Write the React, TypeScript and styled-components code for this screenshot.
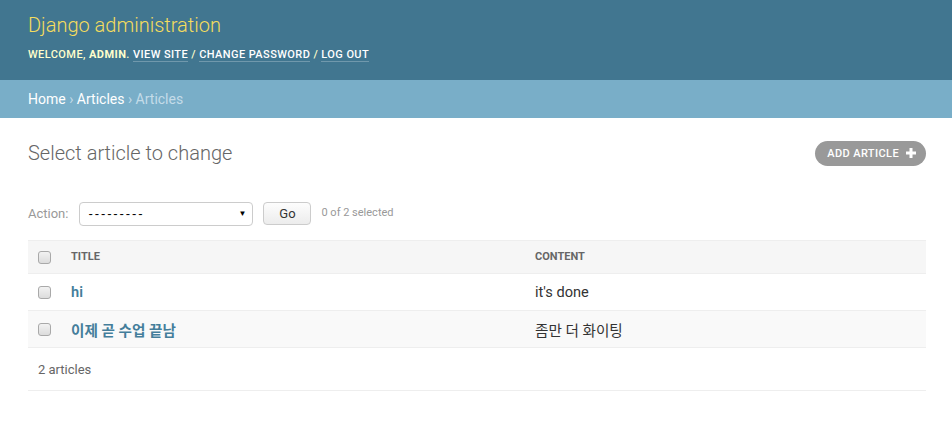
import React from 'react'
import styled, { createGlobalStyle } from 'styled-components'

const GlobalStyle = createGlobalStyle`
  html, body {
    margin: 0;
    padding: 0;
    background: #fff;
  }
  body {
    font-family: Roboto, "Noto Sans CJK KR", "Liberation Sans", sans-serif;
    font-size: 13px;
    color: #333;
  }
`

const Header = styled.header`
  background: #417690;
  color: #ffc;
  height: 80px;
  box-sizing: border-box;
  padding: 11px 28px 0;
`

const Branding = styled.h1`
  margin: 0;
  font-size: 20px;
  font-weight: 300;
  line-height: 28px;
  color: #f5dd5d;
`

const UserTools = styled.div`
  margin-top: 8px;
  font-size: 11px;
  letter-spacing: 0.42px;
  text-transform: uppercase;
  font-weight: 500;
  line-height: 16px;
  color: #ffc;
`

const UserLink = styled.a`
  color: #fff;
  text-decoration: none;
  border-bottom: 1px solid rgba(255, 255, 255, 0.25);
`

const Breadcrumbs = styled.div`
  background: #79aec8;
  padding: 10px 28px;
  font-size: 14px;
  line-height: 18px;
  color: #c4dce8;
`

const Crumb = styled.a`
  color: #fff;
  text-decoration: none;
`

const Content = styled.main`
  padding: 20px 26px 30px 28px;
`

const TitleRow = styled.div`
  display: flex;
  align-items: center;
  justify-content: space-between;
  height: 30px;
`

const PageTitle = styled.h1`
  margin: 0;
  font-size: 20px;
  font-weight: 300;
  color: #666;
  line-height: 30px;
`

const AddButton = styled.a`
  display: flex;
  align-items: center;
  gap: 7px;
  height: 25px;
  box-sizing: border-box;
  padding: 0 10px 0 12px;
  border-radius: 13px;
  background: #999;
  color: #fff;
  font-size: 11px;
  font-weight: 500;
  letter-spacing: 0.4px;
  text-transform: uppercase;
  text-decoration: none;
`

const ActionBar = styled.div`
  display: flex;
  align-items: center;
  height: 25px;
  margin: 33px 0 14px;
  color: #999;
`

const ActionLabel = styled.label`
  font-size: 13px;
  margin-right: 11px;
`

const SelectBox = styled.div`
  display: flex;
  align-items: center;
  justify-content: space-between;
  width: 174px;
  height: 24px;
  box-sizing: border-box;
  border: 1px solid #ccc;
  border-radius: 4px;
  padding: 0 6px 0 8px;
  color: #000;
  font-family: "Liberation Sans", sans-serif;
  font-size: 13px;
`

const Dashes = styled.span`
  letter-spacing: 1.9px;
`

const Arrow = styled.span`
  font-size: 8px;
  color: #000;
`

const GoButton = styled.button`
  margin-left: 10px;
  width: 48px;
  height: 23px;
  border: 1px solid #ccc;
  border-radius: 4px;
  background: linear-gradient(#fdfdfd, #ececec);
  font-family: inherit;
  font-size: 13px;
  color: #333;
  padding: 0;
`

const Counter = styled.span`
  margin-left: 10px;
  font-size: 11px;
  color: #999;
  margin-top: -3px;
`

const Table = styled.div`
  display: grid;
  grid-template-columns: 43px 464px 1fr;
`

const Cell = styled.div<{ $head?: boolean; $alt?: boolean }>`
  display: flex;
  align-items: center;
  height: ${({ $head }) => ($head ? '32px' : '36px')};
  background: ${({ $head, $alt }) => ($head ? '#f6f6f6' : $alt ? '#f9f9f9' : '#fff')};
  border-top: ${({ $head }) => ($head ? '1px solid #eee' : 'none')};
  border-bottom: 1px solid #eee;
  font-size: 14.6px;
  color: #333;
`

const CheckCell = styled(Cell)`
  padding-left: 10px;
`

const HeadText = styled.span`
  font-size: 11px;
  font-weight: 700;
  text-transform: uppercase;
  color: #666;
  margin-top: -1px;
`

const TitleLink = styled.a`
  color: #447e9b;
  font-weight: 600;
  text-decoration: none;
`

const Check = styled.span`
  display: block;
  width: 11px;
  height: 11px;
  border: 1px solid #a9a9a9;
  border-radius: 3px;
  background: linear-gradient(#f2f2f2, #dcdcdc);
`

const Paginator = styled.div`
  grid-column: 1 / -1;
  padding-left: 10px;
  height: 42px;
  display: flex;
  align-items: center;
  border-bottom: 1px solid #eee;
  color: #666;
  font-size: 13px;
`

const rows = [
  { title: 'hi', content: "it's done" },
  { title: '이제 곧 수업 끝남', content: '좀만 더 화이팅' },
]

export default function App() {
  return (
    <>
      <GlobalStyle />
      <Header>
        <Branding>Django administration</Branding>
        <UserTools>
          Welcome, <strong>admin</strong>. <UserLink href="#">View site</UserLink> /{' '}
          <UserLink href="#">Change password</UserLink> / <UserLink href="#">Log out</UserLink>
        </UserTools>
      </Header>
      <Breadcrumbs>
        <Crumb href="#">Home</Crumb> › <Crumb href="#">Articles</Crumb> › Articles
      </Breadcrumbs>
      <Content>
        <TitleRow>
          <PageTitle>Select article to change</PageTitle>
          <AddButton href="#">
            Add article
            <svg width="10" height="10" viewBox="0 0 10 10">
              <path d="M5 0v10M0 5h10" stroke="#fff" strokeWidth="3" />
            </svg>
          </AddButton>
        </TitleRow>
        <ActionBar>
          <ActionLabel>Action:</ActionLabel>
          <SelectBox>
            <Dashes>---------</Dashes>
            <Arrow>▼</Arrow>
          </SelectBox>
          <GoButton>Go</GoButton>
          <Counter>0 of 2 selected</Counter>
        </ActionBar>
        <Table>
          <CheckCell $head>
            <Check />
          </CheckCell>
          <Cell $head>
            <HeadText>Title</HeadText>
          </Cell>
          <Cell $head>
            <HeadText>Content</HeadText>
          </Cell>
          {rows.map((r, i) => (
            <React.Fragment key={i}>
              <CheckCell $alt={i % 2 === 1}>
                <Check />
              </CheckCell>
              <Cell $alt={i % 2 === 1}>
                <TitleLink href="#">{r.title}</TitleLink>
              </Cell>
              <Cell $alt={i % 2 === 1}>{r.content}</Cell>
            </React.Fragment>
          ))}
          <Paginator>2 articles</Paginator>
        </Table>
      </Content>
    </>
  )
}
